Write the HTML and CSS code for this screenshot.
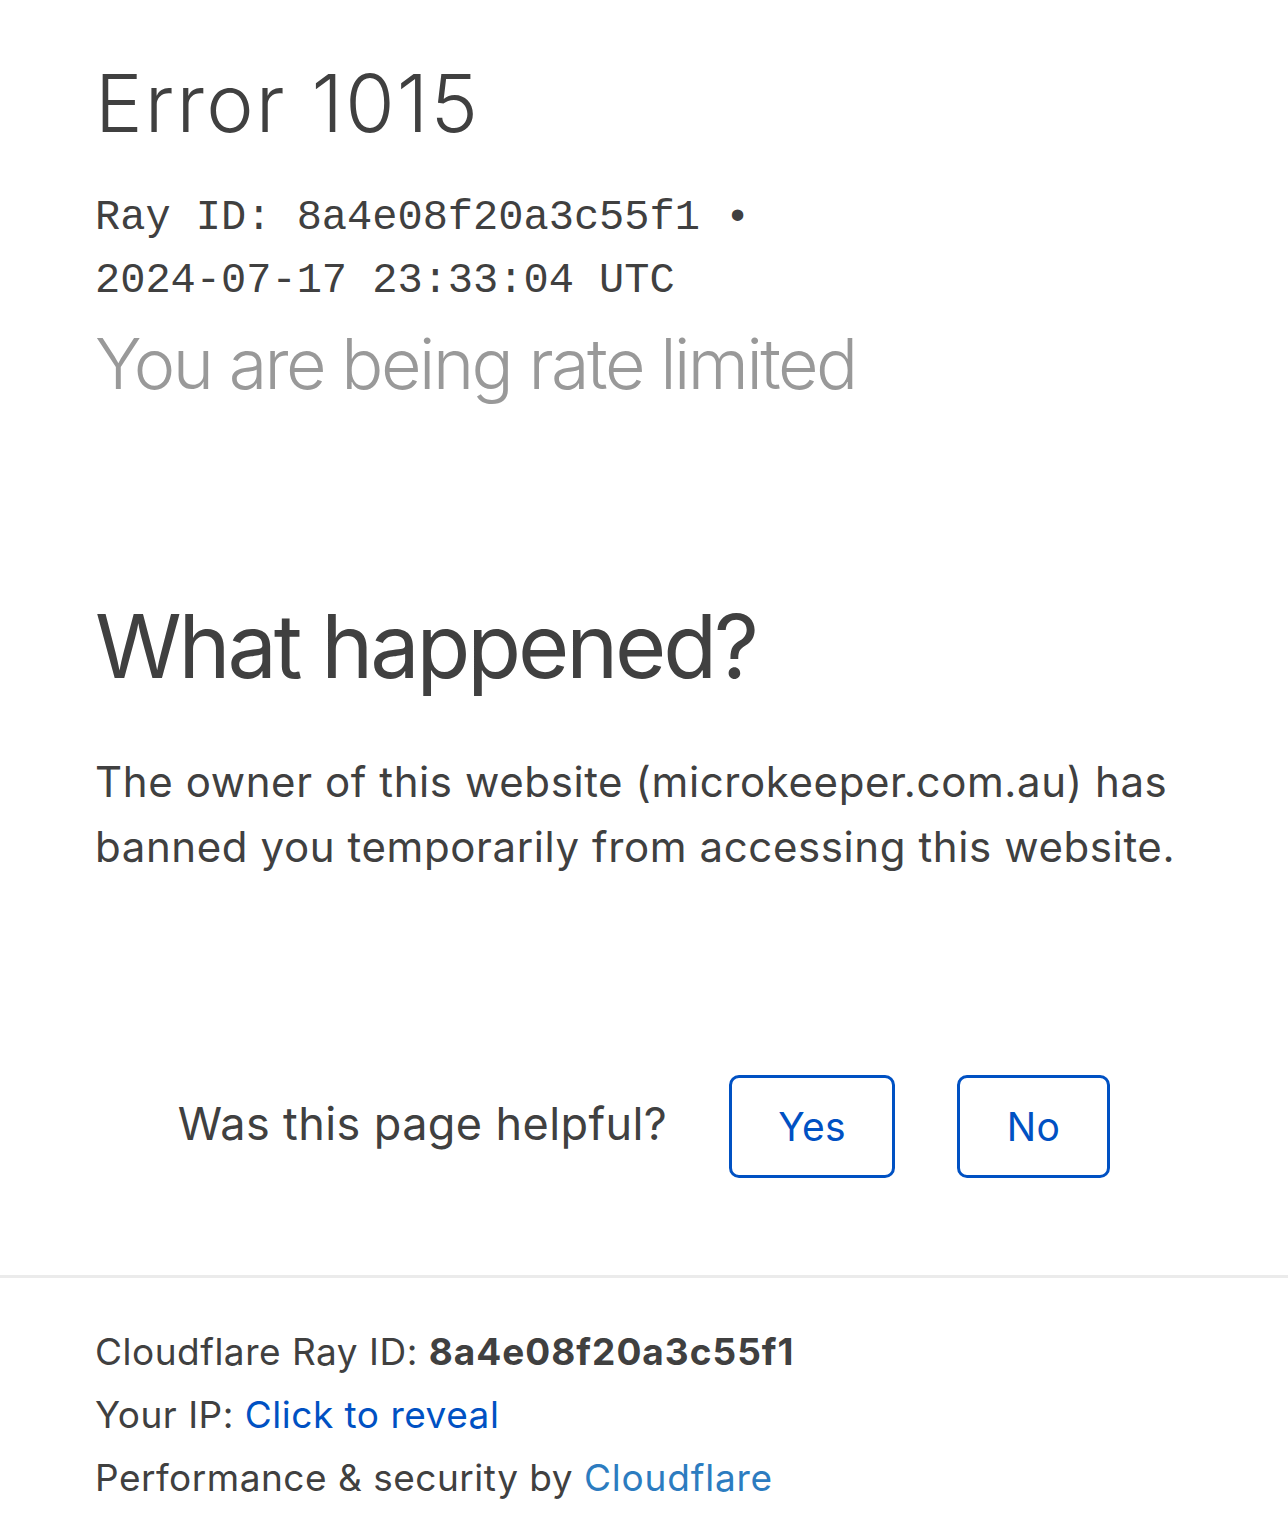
FILE: index.html
```html
<!DOCTYPE html>
<html lang="en">
<head>
<meta charset="utf-8">
<title>Error 1015</title>
<link rel="stylesheet" href="styles.css">
</head>
<body>
<main class="main">
  <header class="head">
    <h1 class="title">Error 1015</h1>
    <p class="ray">Ray ID: 8a4e08f20a3c55f1 &bull; 2024-07-17 23:33:04 UTC</p>
    <h2 class="subtitle">You are being rate limited</h2>
  </header>
  <section class="what">
    <h2 class="what-title">What happened?</h2>
    <p class="what-text">The owner of this website (microkeeper.com.au) has banned you temporarily from accessing this website.</p>
  </section>
  <div class="feedback">
    <span class="feedback-q">Was this page helpful?</span>
    <button class="btn">Yes</button>
    <button class="btn">No</button>
  </div>
</main>
<footer class="footer">
  <p class="foot-line">Cloudflare Ray ID: <strong class="bold">8a4e08f20a3c55f1</strong></p>
  <p class="foot-line">Your IP: <a class="reveal" href="#">Click to reveal</a></p>
  <p class="foot-line">Performance &amp; security by <a class="cf" href="#">Cloudflare</a></p>
</footer>
</body>
</html>
```

FILE: styles.css
```css
* { box-sizing: border-box; }
html, body { margin: 0; padding: 0; background: #fff; }
body {
  font-family: Inter, "Noto Sans", "Liberation Sans", sans-serif;
  color: #404040;
}
.main { padding: 58px 95px 97px 95px; }
.head { margin: 0; }
.title {
  margin: 0;
  font-size: 80px;
  line-height: 90px;
  font-weight: 300;
  letter-spacing: 2.2px;
}
.ray {
  margin: 39px 0 0 0;
  font-family: "Liberation Mono", "DejaVu Sans Mono", monospace;
  font-size: 42px;
  line-height: 63px;
  max-width: 700px;
}
.subtitle {
  margin: 11px 0 0 0;
  font-size: 70px;
  line-height: 80px;
  font-weight: 300;
  color: #999;
  letter-spacing: -2.5px;
}
.what { margin-top: 192px; }
.what-title {
  margin: 0;
  font-size: 88px;
  line-height: 100px;
  font-weight: 400;
  letter-spacing: -3.1px;
}
.what-text {
  margin: 53px 0 0 0;
  font-size: 42px;
  line-height: 65px;
  letter-spacing: 0.6px;
}
.feedback {
  margin: 196px -95px 0 -95px;
  display: flex;
  align-items: center;
  justify-content: center;
  gap: 62px;
}
.feedback-q {
  font-size: 45px;
  line-height: 54px;
  letter-spacing: 0.4px;
  position: relative;
  top: -3px;
}
.btn {
  font-family: inherit;
  background: #fff;
  color: #0051c3;
  border: 3px solid #0051c3;
  border-radius: 10px;
  height: 103px;
  padding: 0 46px;
  font-size: 39px;
  line-height: 1;
  letter-spacing: 0.3px;
}
.btn + .btn { padding: 0 47px; }
.footer {
  border-top: 3px solid #ebebeb;
  padding: 42px 95px 10px 95px;
}
.foot-line {
  margin: 0;
  font-size: 37px;
  line-height: 63px;
  letter-spacing: 0.5px;
}
.bold { font-weight: 700; letter-spacing: 1px; }
.reveal { color: #0051c3; text-decoration: none; }
.cf { color: #2c7cc0; text-decoration: none; letter-spacing: 0.8px; }
```
